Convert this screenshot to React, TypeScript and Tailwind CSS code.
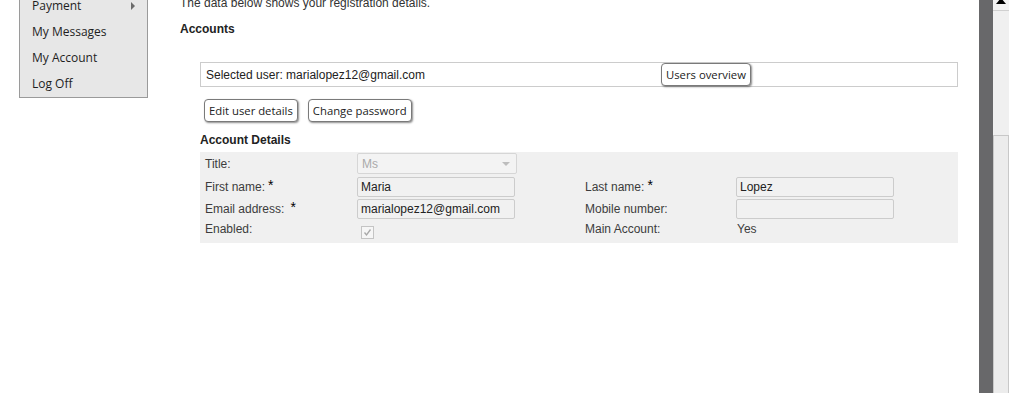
const sans = "font-['Liberation_Sans',Arial,sans-serif]";
const ui = "font-['Open_Sans','Noto_Sans',sans-serif]";

const menuItems = ["Payment", "My Messages", "My Account", "Log Off"];

const Field = ({ value, className = "" }: { value: string; className?: string }) => (
  <div
    className={`flex h-[20px] items-center rounded-[2px] border border-[#cccccc] bg-[#f1f1f1] pl-[3px] text-[12px] text-[#222] ${className}`}
  >
    {value}
  </div>
);

const Star = ({ gap }: { gap: string }) => (
  <span className={`${gap} mt-[-4px] text-[14px] leading-[12px] text-black`}>*</span>
);

const Btn = ({ label, className = "" }: { label: string; className?: string }) => (
  <button
    className={`${ui} h-[23px] rounded-[4px] border border-[#7a7a7a] bg-white px-[4px] text-[11.3px] leading-none text-[#222] shadow-[1px_1px_2px_rgba(0,0,0,0.45)] ${className}`}
  >
    {label}
  </button>
);

export default function App() {
  return (
    <div className={`${sans} flex h-[393px] w-[1009px] overflow-hidden bg-white`}>
      <div className="relative w-[979px] shrink-0">
        {/* dropdown menu */}
        <div className="absolute left-[19px] top-[-7px] w-[129px] border border-t-0 border-[#9a9a9a] bg-[#e7e7e7]">
          {menuItems.map((item, i) => (
            <div
              key={item}
              className={`${ui} flex h-[26px] items-center justify-between pl-[12px] pr-[12px] text-[12px] text-[#1e1e1e]`}
            >
              <span>{item}</span>
              {i === 0 && (
                <span className="h-0 w-0 border-y-[4px] border-l-[4px] border-y-transparent border-l-[#6b6b6b]" />
              )}
            </div>
          ))}
        </div>

        <div className="pl-[180px] text-[12px] text-[#333]">
          <p className="mt-[-4px] leading-[15px]">The data below shows your registration details.</p>
          <h3 className="mt-[11px] font-bold leading-[15px] text-[#222]">Accounts</h3>

          <div className="pl-[20px]">
            <div className="mt-[25px] flex h-[25px] w-[758px] items-center border border-[#cccccc] pl-[5px] text-[#222]">
              <span className="w-[455px]">Selected user: marialopez12@gmail.com</span>
              <Btn label="Users overview" />
            </div>

            <div className="mt-[12px] flex gap-[10px] pl-[4px]">
              <Btn label="Edit user details" />
              <Btn label="Change password" />
            </div>

            <h3 className="mt-[11px] font-bold leading-[15px] text-[#222]">Account Details</h3>

            <div className="mt-[4px] flex h-[91px] w-[758px] flex-col bg-[#f0f0f0] pl-[5px] pt-[1px] text-[#3c3c3c]">
              <div className="flex h-[21px] items-center">
                <span className="w-[152px]">Title:</span>
                <div className="flex h-[21px] w-[160px] items-center justify-between rounded-[2px] border border-[#d6d6d6] bg-[#f3f3f3] pl-[4px] pr-[6px] text-[#aaaaaa]">
                  <span>Ms</span>
                  <span className="h-0 w-0 border-x-[4px] border-t-[4px] border-x-transparent border-t-[#bdbdbd]" />
                </div>
              </div>

              <div className="mt-[3px] flex h-[20px] items-center">
                <span className="flex w-[152px] items-center">
                  First name:
                  <Star gap="ml-[3px]" />
                </span>
                <Field value="Maria" className="w-[158px]" />
                <span className="w-[70px]" />
                <span className="flex w-[151px] items-center">
                  Last name:
                  <Star gap="ml-[3px]" />
                </span>
                <Field value="Lopez" className="w-[158px]" />
              </div>

              <div className="mt-[2px] flex h-[20px] items-center">
                <span className="flex w-[152px] items-center">
                  Email address:
                  <Star gap="ml-[6px]" />
                </span>
                <Field value="marialopez12@gmail.com" className="w-[158px]" />
                <span className="w-[70px]" />
                <span className="w-[151px]">Mobile number:</span>
                <Field value="" className="w-[158px]" />
              </div>

              <div className="mt-[2px] flex h-[16px] items-center">
                <span className="w-[152px]">Enabled:</span>
                <span className="ml-[4px] mt-[6px] flex h-[13px] w-[13px] items-center justify-center border border-[#c4c4c4] bg-[#f6f6f6]">
                  <svg width="9" height="9" viewBox="0 0 9 9">
                    <path d="M1.5 4.5 L3.5 7 L7.5 1.5" fill="none" stroke="#a8a8a8" strokeWidth="1.3" />
                  </svg>
                </span>
                <span className="w-[211px]" />
                <span className="w-[151px]">Main Account:</span>
                <span className="pl-[1px]">Yes</span>
              </div>
            </div>
          </div>
        </div>
      </div>

      {/* window edge */}
      <div className="w-[14px] shrink-0 bg-[#68686a]" />

      {/* scrollbar */}
      <div className="flex w-[16px] shrink-0 flex-col bg-[#f0f0f0]">
        <div className="flex h-[11px] items-start justify-center border-b border-[#d0d0d0] bg-[#f4f4f4]">
          <span className="mt-[-2px] h-0 w-0 border-x-[5px] border-b-[6px] border-x-transparent border-b-black" />
        </div>
        <div className="h-[124px]" />
        <div className="flex-1 border border-b-0 border-[#c8c8c8] bg-[#ececec]" />
      </div>
    </div>
  );
}
